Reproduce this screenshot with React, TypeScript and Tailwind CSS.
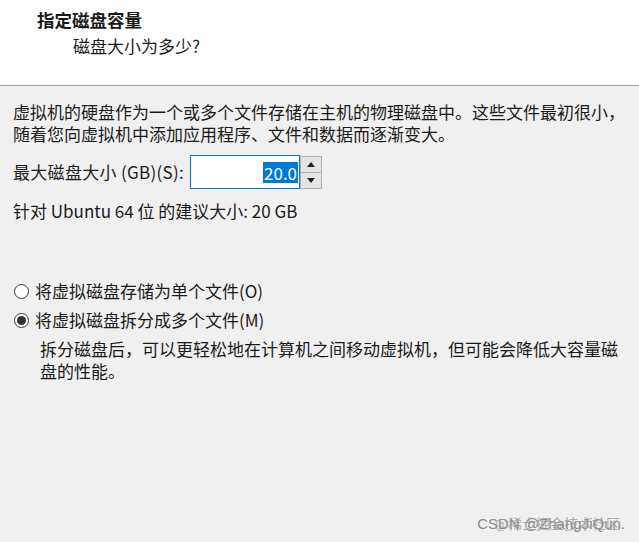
import React from 'react'

const font = { fontFamily: '"Noto Sans CJK SC", "Microsoft YaHei", sans-serif' }

const Radio = ({ checked }: { checked?: boolean }) => (
  <span className="w-[15px] h-[15px] rounded-full border border-[#333] bg-white flex items-center justify-center shrink-0">
    {checked && <span className="w-[9px] h-[9px] rounded-full bg-[#333]" />}
  </span>
)

export default function App() {
  return (
    <div className="w-[639px] h-[542px] flex flex-col text-[#1a1a1a] relative overflow-hidden" style={font}>
      <div className="h-[86px] bg-white border-b border-[#a0a0a0] pt-[9px]">
        <div className="pl-[37px] text-[17.5px] font-bold leading-[22px]">指定磁盘容量</div>
        <div className="pl-[73px] mt-[4px] text-[17px] leading-[22px]">磁盘大小为多少?</div>
      </div>

      <div className="flex-1 bg-[#f0f0f0] pl-[13px] pt-[15px] text-[17px] leading-[22px]">
        <div>
          <div>虚拟机的硬盘作为一个或多个文件存储在主机的物理磁盘中。这些文件最初很小，</div>
          <div>随着您向虚拟机中添加应用程序、文件和数据而逐渐变大。</div>
        </div>

        <div className="flex items-center mt-[10px]">
          <span className="tracking-[0.3px]">最大磁盘大小 (GB)(S):</span>
          <div className="ml-[6px] w-[110px] h-[34px] bg-white border border-[#0078d7] flex items-center justify-end pr-[1px]">
            <span className="bg-[#0078d7] text-white leading-[21px] px-[1px]">20.0</span>
          </div>
          <div className="flex flex-col w-[22px] h-[33px] border border-[#adadad] bg-[#e5e5e5]">
            <div className="flex-1 flex items-center justify-center border-b border-[#adadad]">
              <svg width="8" height="5" viewBox="0 0 8 5"><path d="M4 0L8 5H0Z" fill="#222" /></svg>
            </div>
            <div className="flex-1 flex items-center justify-center">
              <svg width="8" height="5" viewBox="0 0 8 5"><path d="M0 0H8L4 5Z" fill="#222" /></svg>
            </div>
          </div>
        </div>

        <p className="mt-[11px]">针对 Ubuntu 64 位 的建议大小: 20 GB</p>

        <div className="mt-[58px] flex flex-col gap-[7px]">
          <label className="flex items-center gap-[6px] pl-[1px]">
            <Radio />
            <span>将虚拟磁盘存储为单个文件(O)</span>
          </label>
          <label className="flex items-center gap-[6px] pl-[1px]">
            <Radio checked />
            <span>将虚拟磁盘拆分成多个文件(M)</span>
          </label>
        </div>

        <div className="pl-[27px] mt-[7px] pr-[10px]">
          <div>拆分磁盘后，可以更轻松地在计算机之间移动虚拟机，但可能会降低大容量磁</div>
          <div>盘的性能。</div>
        </div>
      </div>

      <div className="absolute right-[14px] bottom-[11px] text-[15px] text-[#8a8a8a] leading-none" style={{ fontFamily: '"Liberation Sans", "Noto Sans CJK SC", sans-serif' }}>
        CSDN @ZhangJiQun.
      </div>
      <div className="absolute right-[19px] bottom-[12px] text-[14px] text-[#9a9a9a] leading-none opacity-80">
        @稀土掘金技术社区
      </div>
    </div>
  )
}
